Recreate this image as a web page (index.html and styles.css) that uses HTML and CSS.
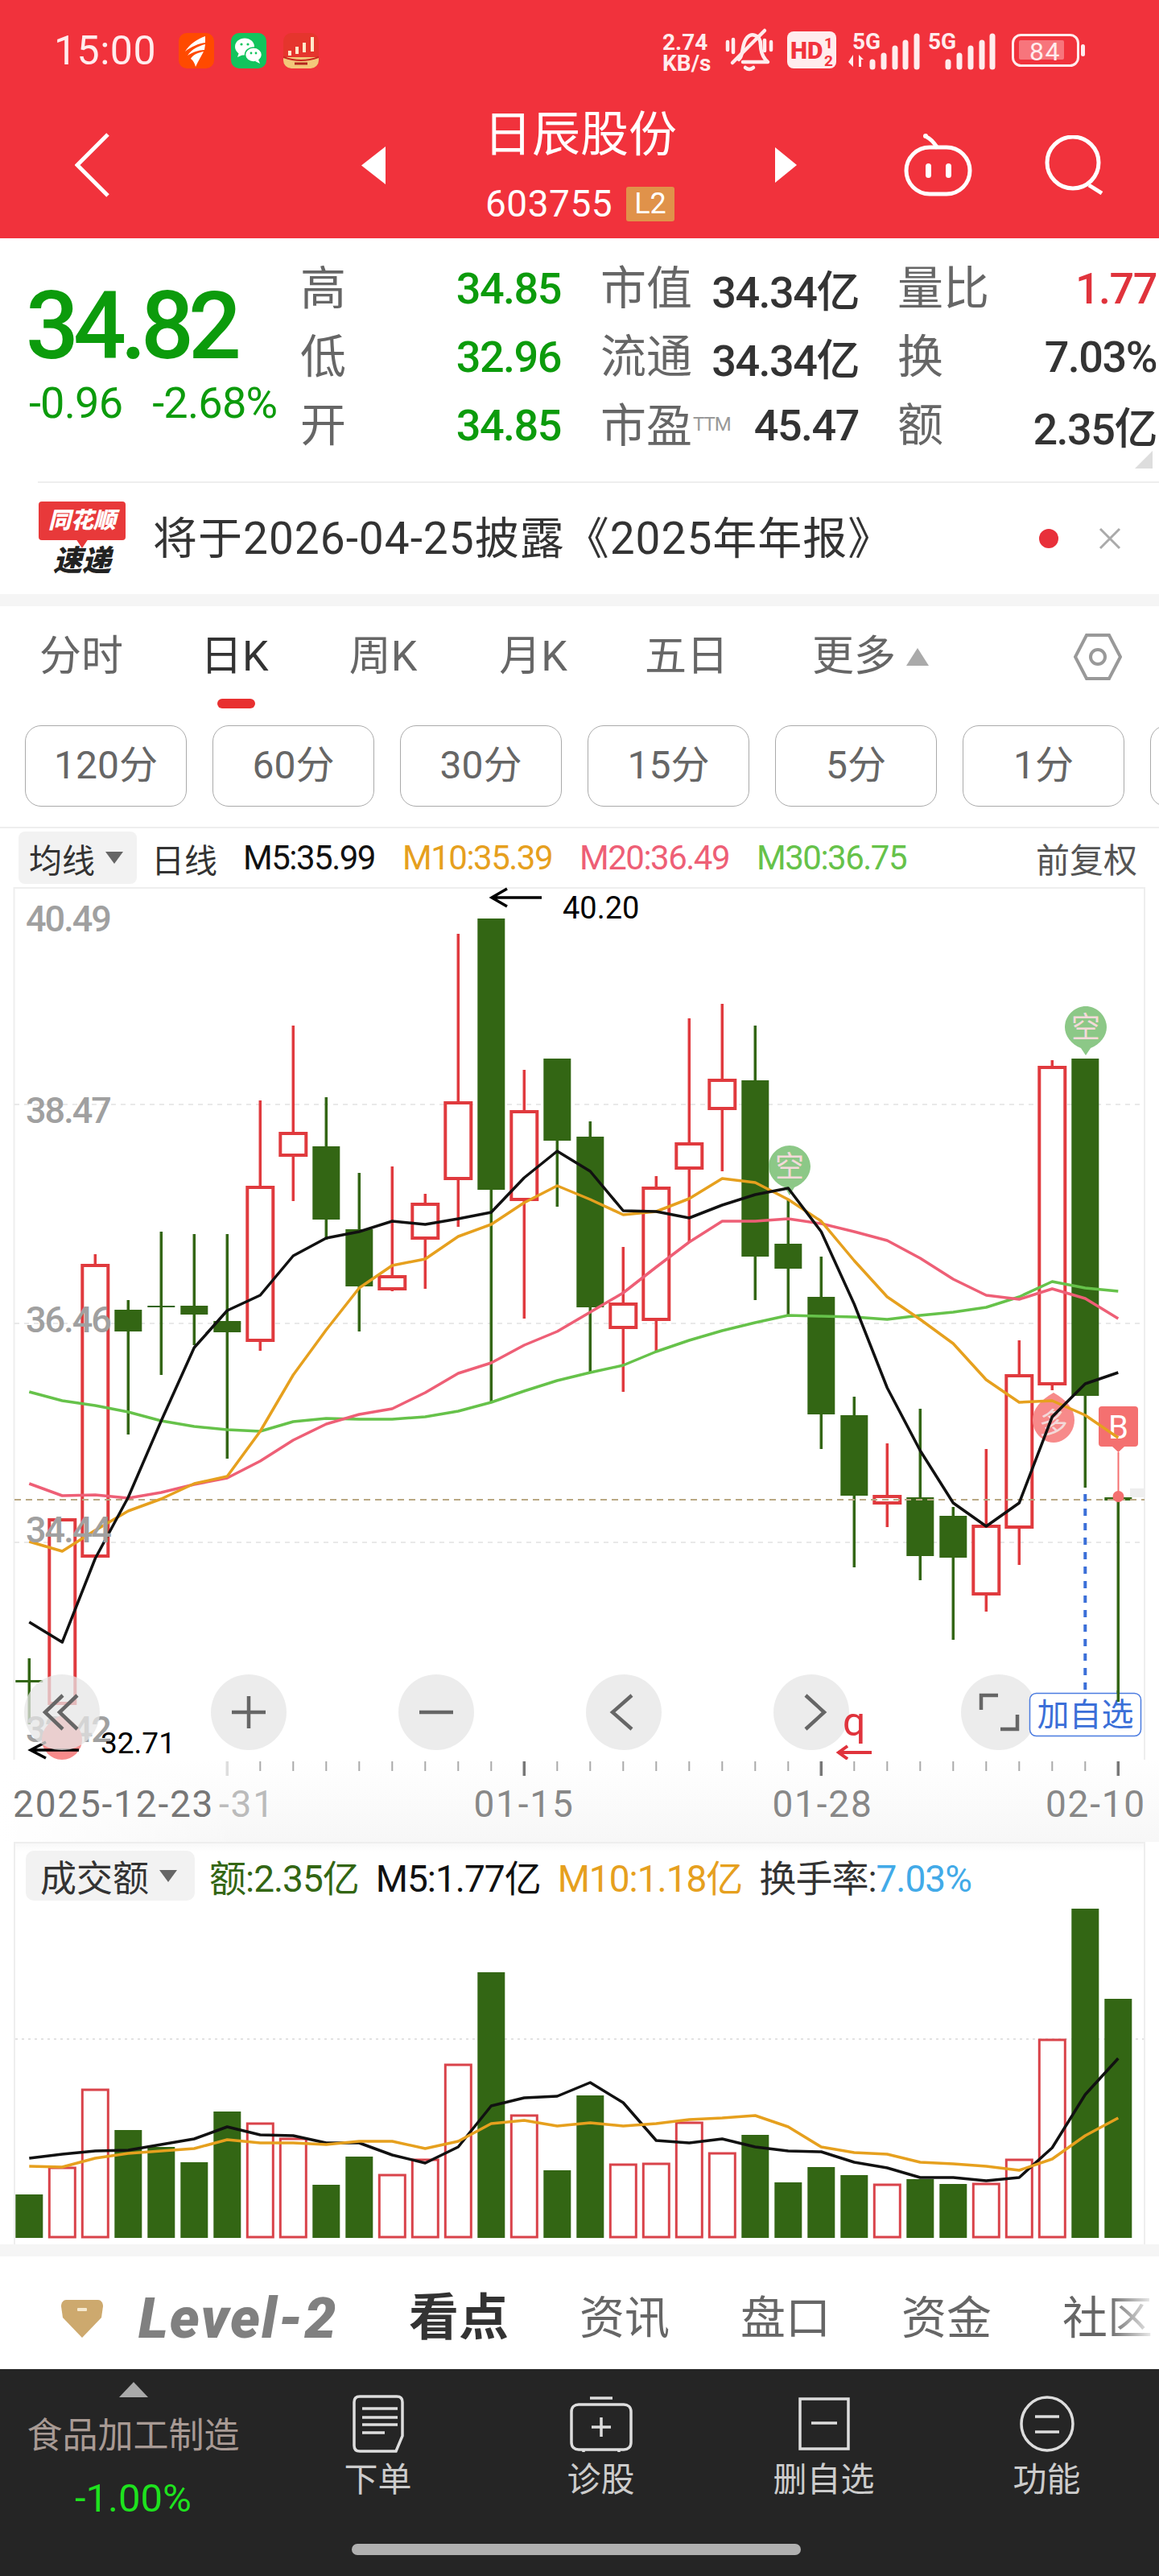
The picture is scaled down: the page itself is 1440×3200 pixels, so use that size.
FILE: index.html
```html
<!DOCTYPE html>
<html lang="zh-CN">
<head>
<meta charset="utf-8">
<title>日辰股份</title>
<link rel="stylesheet" href="styles.css">
</head>
<body>
<div class="page">
  <header class="header">
    <div class="statusbar">
      <div class="status-left">
        <span class="time">15:00</span>
        <svg class="app-icon app-first" viewBox="0 0 44 44"><rect width="44" height="44" rx="10" fill="#ff4a00"/><path d="M33 4C24 7 13 14 8 23c7-6 17-10 25-11zM33 14c-8 2-17 6-22 14 6-4 14-7 21-7zM31 23c-6 1-14 4-16 9 3 2 5 6 6 10 3-7 7-13 10-19z" fill="#fff"/></svg>
        <svg class="app-icon" viewBox="0 0 44 44"><rect width="44" height="44" rx="10" fill="#12c45d"/><ellipse cx="17" cy="17" rx="12" ry="10.5" fill="#fff"/><path d="M10 24l-2 6 7-3z" fill="#fff"/><ellipse cx="28" cy="27" rx="10.5" ry="9" fill="#fff" stroke="#12c45d" stroke-width="1.5"/><path d="M34 33l2 5-6-3z" fill="#fff"/><circle cx="13" cy="14" r="1.6" fill="#12c45d"/><circle cx="21" cy="14" r="1.6" fill="#12c45d"/><circle cx="25" cy="25" r="1.4" fill="#12c45d"/><circle cx="31" cy="25" r="1.4" fill="#12c45d"/></svg>
        <svg class="app-icon" viewBox="0 0 44 44"><rect width="44" height="44" rx="10" fill="#e5352d"/><path d="M0 30h44v4a10 10 0 0 1-10 10H10A10 10 0 0 1 0 34z" fill="#f3c77a"/><path d="M0 30q22 8 44 0" fill="none" stroke="#c9261f" stroke-width="2"/><path d="M6 22h4v6H6zM15 17h4v9h-4zM24 12h4v12h-4zM34 5h4v18h-4z" fill="#ffe9c9"/><path d="M14 38h16" stroke="#b3261e" stroke-width="3"/></svg>
      </div>
      <svg class="status-right" viewBox="820 30 530 66">
        <text class="st-small" x="823" y="62">2.74</text>
        <text class="st-small" x="823" y="88">KB/s</text>
        <g class="st-line">
          <path d="M918 74c6-6 3-14 8-24 3-6 8-8 12-6 4 1 7 5 7 12 0 8 2 13 6 18l3 3h-31"/>
          <path d="M910 78l40-40"/>
          <path d="M904 52v10M911 49v16M950 50v13M958 52v10"/>
          <path d="M926 84q5 4 10 0" />
        </g>
        <rect class="st-fill" x="978" y="39" width="61" height="46" rx="8"/>
        <text class="st-hd" x="982" y="73">HD</text>
        <text class="st-hd-sm" x="1024" y="60">1</text>
        <text class="st-hd-sm" x="1024" y="82">2</text>
        <text class="st-small" x="1059" y="61">5G</text>
        <path class="st-fill" d="M1060 68v15l-6-6zM1067 68l6 6h-3v9h-3z"/>
        <path class="st-bar" d="M1084 83v-6M1098 83v-14M1112 83v-23M1125 83v-30M1139 83v-38"/>
        <text class="st-small" x="1153" y="61">5G</text>
        <path class="st-bar" d="M1178 83v-6M1192 83v-14M1206 83v-23M1220 83v-30M1233 83v-38"/>
        <rect class="st-batt" x="1258.5" y="43.5" width="81" height="38" rx="10"/>
        <rect class="st-batt-fill" x="1266" y="50" width="56" height="24" rx="2"/>
        <text class="st-batt-num" x="1279" y="75">84</text>
        <rect class="st-fill" x="1343" y="55" width="5" height="15" rx="2.5"/>
      </svg>
    </div>
    <nav class="navrow">
      <svg class="nav-back" viewBox="0 0 44 80"><path d="M41 2L3 40l38 38"/></svg>
      <svg class="nav-prev" viewBox="0 0 30 47"><path d="M30 0L0 23.5 30 47z"/></svg>
      <div class="nav-title">
        <div class="stock-name">日辰股份</div>
        <div class="stock-code"><span class="code-num">603755</span><span class="l2">L2</span></div>
      </div>
      <svg class="nav-next" viewBox="0 0 27 44"><path d="M0 0l27 22L0 44z"/></svg>
      <svg class="nav-robot" viewBox="0 0 85 78"><g class="robot-line"><path d="M28 4c5 2 10 8 14 14"/><rect x="3" y="17" width="79" height="58" rx="29"/></g><circle cx="27" cy="3" r="3" fill="#fff"/><rect x="27" y="37" width="7" height="18" rx="3.5" fill="#fff"/><rect x="52" y="37" width="7" height="18" rx="3.5" fill="#fff"/></svg>
      <svg class="nav-search" viewBox="0 0 74 74"><g class="robot-line"><circle cx="35" cy="34" r="32"/><path d="M55 62l16 10"/></g></svg>
    </nav>
  </header>

  <section class="quote">
    <div class="quote-main">
      <div class="price">34.82</div>
      <div class="change"><span>-0.96</span><span>-2.68%</span></div>
    </div>
    <div class="quote-grid">
      <span class="q-l q-l1">高</span><span class="q-v green">34.85</span><span class="q-l q-l2">市值</span><span class="q-v dark q-v2">34.34亿</span><span class="q-l q-l3">量比</span><span class="q-v red">1.77</span>
      <span class="q-l q-l1">低</span><span class="q-v green">32.96</span><span class="q-l q-l2">流通</span><span class="q-v dark q-v2">34.34亿</span><span class="q-l q-l3">换</span><span class="q-v dark">7.03%</span>
      <span class="q-l q-l1">开</span><span class="q-v green">34.85</span><span class="q-l q-l2">市盈<small>TTM</small></span><span class="q-v dark q-v2">45.47</span><span class="q-l q-l3">额</span><span class="q-v dark">2.35亿</span>
    </div>
    <svg class="corner" viewBox="0 0 22 22"><path d="M22 0v22H0z"/></svg>
  </section>

  <div class="notice">
    <div class="notice-logo">
      <div class="flag">同花顺</div>
      <div class="flag-sub">速递</div>
    </div>
    <div class="notice-text">将于2026-04-25披露《2025年年报》</div>
    <span class="notice-dot"></span>
    <svg class="notice-x" viewBox="0 0 28 28"><path d="M2 2l24 24M26 2L2 26"/></svg>
  </div>

  <div class="gap"></div>

  <div class="tabs">
    <span class="tab tab-a">分时</span>
    <span class="tab active tab-b">日K</span>
    <span class="tab">周K</span>
    <span class="tab tab-a">月K</span>
    <span class="tab tab-c">五日</span>
    <span class="tab tab-more">更多<i class="up-caret"></i></span>
    <svg class="hex" viewBox="0 0 60 58"><path d="M16 2h28l14 27-14 27H16L2 29z"/><circle cx="30" cy="29" r="9"/></svg>
  </div>

  <div class="periods">
    <span class="period">120分</span>
    <span class="period">60分</span>
    <span class="period">30分</span>
    <span class="period">15分</span>
    <span class="period">5分</span>
    <span class="period">1分</span>
    <span class="period"></span>
  </div>

  <div class="ma-legend">
    <span class="pill">均线<i class="caret"></i></span>
    <span class="ma-name">日线</span>
    <span class="ma c-black">M5:35.99</span>
    <span class="ma c-orange">M10:35.39</span>
    <span class="ma c-pink">M20:36.49</span>
    <span class="ma c-green">M30:36.75</span>
    <span class="adjust">前复权</span>
  </div>

  <svg class="kline" viewBox="0 1102 1440 1084">
    <path class="frame" d="M17.5 2186V1103H1422V2186"/>
    <path class="grid" d="M18 1372H1421M18 1644H1421M18 1916H1421"/>

    <path class="wick-g" d="M36.3 2060V2142M159.3 1615V1782M200.3 1530V1708M241.3 1533V1671M282.3 1533V1812M405.3 1363V1540M446.3 1457V1654M610.3 1141V1741M692.3 1315V1499M733.3 1393V1705M938.3 1274V1615M979.3 1490V1634M1020.3 1561V1800M1061.3 1735V1947M1143.3 1750V1963M1184.3 1872V2037M1348.3 1315V1848M1389.3 1856V2114"/>
    <path class="wick-r" d="M118.3 1558V1572M323.3 1367V1678M364.3 1274V1492M487.3 1449V1604M528.3 1483V1601M569.3 1160V1524M651.3 1329V1638M774.3 1549V1729M815.3 1461V1678M856.3 1265V1543M897.3 1247V1455M1102.3 1793V1897M1225.3 1800V2002M1266.3 1665V1944M1307.3 1317V1727"/>

    <g class="body-g">
      <rect x="19.3" y="2087" width="34" height="3"/>
      <rect x="142.3" y="1627" width="34" height="27"/>
      <rect x="183.3" y="1622" width="34" height="2"/>
      <rect x="224.3" y="1622" width="34" height="11"/>
      <rect x="265.3" y="1641" width="34" height="14"/>
      <rect x="388.3" y="1424" width="34" height="91"/>
      <rect x="429.3" y="1527" width="34" height="71"/>
      <rect x="593.3" y="1141" width="34" height="337"/>
      <rect x="675.3" y="1315" width="34" height="102"/>
      <rect x="716.3" y="1412" width="34" height="212"/>
      <rect x="921.3" y="1342" width="34" height="219"/>
      <rect x="962.3" y="1545" width="34" height="31"/>
      <rect x="1003.3" y="1611" width="34" height="146"/>
      <rect x="1044.3" y="1758" width="34" height="100"/>
      <rect x="1126.3" y="1860" width="34" height="73"/>
      <rect x="1167.3" y="1883" width="34" height="52"/>
      <rect x="1331.3" y="1315" width="34" height="419"/>
      <rect x="1372.3" y="1860" width="34" height="4"/>
    </g>
    <g class="body-r">
      <rect x="61.3" y="1888" width="32" height="228"/>
      <rect x="102.3" y="1572" width="32" height="361"/>
      <rect x="307.3" y="1475" width="32" height="190"/>
      <rect x="348.3" y="1408" width="32" height="27"/>
      <rect x="471.3" y="1586" width="32" height="15"/>
      <rect x="512.3" y="1496" width="32" height="42"/>
      <rect x="553.3" y="1370" width="32" height="94"/>
      <rect x="635.3" y="1381" width="32" height="109"/>
      <rect x="758.3" y="1620" width="32" height="29"/>
      <rect x="799.3" y="1476" width="32" height="163"/>
      <rect x="840.3" y="1421" width="32" height="30"/>
      <rect x="881.3" y="1342" width="32" height="35"/>
      <rect x="1086.3" y="1859" width="32" height="8"/>
      <rect x="1209.3" y="1896" width="32" height="84"/>
      <rect x="1250.3" y="1709" width="32" height="188"/>
      <rect x="1291.3" y="1326" width="32" height="393"/>
    </g>

    <rect class="tag-bg" x="1404" y="1849" width="18" height="11"/>
    <path class="priceline" d="M18 1863H1422"/>
    <path class="blue-dash" d="M1348.3 1856V2103"/>

    <g class="marker-g">
      <path d="M981 1485l-6-10c-12-5-20-15-20-26 0-14 12-26 26-26s26 12 26 26c0 11-8 21-20 26z"/>
      <path d="M1349 1311l-6-9c-12-5-20-15-20-26 0-14 12-26 26-26s26 12 26 26c0 11-8 21-20 26z"/>
    </g>
    <text class="marker-text" x="981" y="1462">空</text>
    <text class="marker-text" x="1349" y="1289">空</text>
    <path class="marker-r" d="M1309 1730c16 9 26 20 26 34 0 15-12 28-26 28s-26-13-26-28c0-14 10-25 26-34z"/>
    <text class="marker-text" x="1309" y="1781">多</text>
    <path class="b-stem" d="M1389.5 1804V1856"/>
    <circle class="b-dot" cx="1389.5" cy="1859" r="7"/>
    <path class="marker-b" d="M1369 1747h41a4 4 0 0 1 4 4v42a4 4 0 0 1-4 4h-13l-7.5 7-7.5-7h-13a4 4 0 0 1-4-4v-42a4 4 0 0 1 4-4z"/>
    <text class="marker-bt" x="1389.5" y="1787">B</text>

    <polyline class="ln ln-green" points="36.3,1729 77.3,1740 118.3,1746 159.3,1754 200.3,1765 241.3,1772 282.3,1776 323.3,1778 364.3,1766 405.3,1762 446.3,1763 487.3,1763 528.3,1760 569.3,1753 610.3,1742 651.3,1728 692.3,1715 733.3,1705 774.3,1696 815.3,1679 856.3,1665 897.3,1653 938.3,1643 979.3,1634 1020.3,1635 1061.3,1636 1102.3,1639 1143.3,1634 1184.3,1630 1225.3,1624 1266.3,1611 1307.3,1592 1348.3,1600 1389.3,1604"/>
    <polyline class="ln ln-pink" points="36.3,1843 77.3,1858 118.3,1857 159.3,1861 200.3,1854 241.3,1844 282.3,1836 323.3,1815 364.3,1789 405.3,1769 446.3,1757 487.3,1750 528.3,1730 569.3,1706 610.3,1693 651.3,1671 692.3,1654 733.3,1630 774.3,1606 815.3,1574 856.3,1543 897.3,1517 938.3,1517 979.3,1514 1020.3,1520 1061.3,1530 1102.3,1541 1143.3,1563 1184.3,1589 1225.3,1609 1266.3,1614 1307.3,1601 1348.3,1613 1389.3,1638"/>
    <polyline class="ln ln-orange" points="36.3,1915 77.3,1927 118.3,1901 159.3,1877 200.3,1862 241.3,1843 282.3,1834 323.3,1778 364.3,1708 405.3,1652 446.3,1600 487.3,1572 528.3,1564 569.3,1536 610.3,1521 651.3,1494 692.3,1473 733.3,1490 774.3,1509 815.3,1505 856.3,1489 897.3,1464 938.3,1469 979.3,1490 1020.3,1517 1061.3,1566 1102.3,1611 1143.3,1639 1184.3,1669 1225.3,1714 1266.3,1742 1307.3,1740 1348.3,1758 1389.3,1786"/>
    <polyline class="ln ln-black" points="36.3,2015 77.3,2040 118.3,1936 159.3,1860 200.3,1765 241.3,1674 282.3,1628 323.3,1609 364.3,1560 405.3,1538 446.3,1530 487.3,1517 528.3,1521 569.3,1514 610.3,1506 651.3,1463 692.3,1430 733.3,1455 774.3,1504 815.3,1505 856.3,1513 897.3,1497 938.3,1484 979.3,1476 1020.3,1530 1061.3,1620 1102.3,1724 1143.3,1802 1184.3,1867 1225.3,1896 1266.3,1867 1307.3,1760 1348.3,1719 1389.3,1705"/>

    <text class="axis-price" x="32" y="1157">40.49</text>
    <text class="axis-price" x="32" y="1395">38.47</text>
    <text class="axis-price" x="32" y="1655">36.46</text>
    <text class="axis-price" x="32" y="1916">34.44</text>
    <text class="axis-price" x="32" y="2164">32.42</text>

    <path class="arrow-k" d="M673 1115H612M630 1104l-19 11 19 11"/>
    <text class="peak" x="699" y="1141">40.20</text>
    <path class="marker-r" d="M77 2130c16 8 25 18 25 31s-11 25-25 25-25-12-25-25 9-23 25-31z"/>
    <path class="arrow-k" d="M98 2174H39M57 2164l-19 10 19 10"/>
    <text class="peak peak-low" x="125" y="2178">32.71</text>

    <g class="round-btn">
      <circle cx="77" cy="2127" r="47"/>
      <circle cx="309" cy="2127" r="47"/>
      <circle cx="542" cy="2127" r="47"/>
      <circle cx="775" cy="2127" r="47"/>
      <circle cx="1008" cy="2127" r="47"/>
      <circle cx="1241" cy="2127" r="47"/>
    </g>
    <path class="round-ico" d="M78 2106l-22 21 22 21M96 2106l-22 21 22 21M309 2107v40M288 2127h42M521 2127h42M785 2106l-24 21 24 21M1001 2106l23 21-23 21M1240 2106h-21v18M1243 2148h21v-18"/>

    <rect class="add-box" x="1279.5" y="2103.5" width="138" height="53" rx="8"/>
    <text class="add-text" x="1348.5" y="2144">加自选</text>
    <path class="wick-g" d="M1389.3 2100V2114"/>
    <text class="red-q" x="1047" y="2156">q</text>
    <path class="arrow-r" d="M1083 2177H1041M1053 2169l-11 8 11 8"/>
  </svg>

  <div class="axis">
    <svg class="axis-svg" viewBox="0 2186 1440 102">
      <path class="tick-light" d="M282.3 2188V2206"/>
      <path class="tick" d="M323.3 2188V2200M364.3 2188V2200M405.3 2188V2200M446.3 2188V2200M487.3 2188V2200M528.3 2188V2200M569.3 2188V2200M610.3 2188V2200M692.3 2188V2200M733.3 2188V2200M774.3 2188V2200M815.3 2188V2200M856.3 2188V2200M897.3 2188V2200M938.3 2188V2200M979.3 2188V2200M1061.3 2188V2200M1102.3 2188V2200M1143.3 2188V2200M1184.3 2188V2200M1225.3 2188V2200M1266.3 2188V2200M1307.3 2188V2200M1348.3 2188V2200"/>
      <path class="tick-major" d="M651.3 2188V2206M1020.3 2188V2206M1389.3 2188V2206"/>
      <text class="date" x="16" y="2257">2025-12-23</text>
      <text class="date date-fade" x="272" y="2257">-31</text>
      <text class="date date-mid" x="651" y="2257">01-15</text>
      <text class="date date-mid" x="1022" y="2257">01-28</text>
      <text class="date date-end" x="1424" y="2257">02-10</text>
    </svg>
  </div>

  <section class="vol">
    <div class="vol-legend">
      <span class="pill pill-lg">成交额<i class="caret"></i></span>
      <span class="vl c-dgreen">额:2.35亿</span>
      <span class="vl c-black">M5:1.77亿</span>
      <span class="vl c-orange">M10:1.18亿</span>
      <span class="vl c-dark">换手率:<em class="c-blue">7.03%</em></span>
    </div>
    <svg class="vol-svg" viewBox="19 2371 1402 412">
      <path class="grid grid-dot" d="M19 2533H1421"/>
      <g class="body-g">
        <rect x="19.3" y="2726" width="34" height="54"/>
        <rect x="142.3" y="2646" width="34" height="134"/>
        <rect x="183.3" y="2667" width="34" height="113"/>
        <rect x="224.3" y="2686" width="34" height="94"/>
        <rect x="265.3" y="2623" width="34" height="157"/>
        <rect x="388.3" y="2714" width="34" height="66"/>
        <rect x="429.3" y="2679" width="34" height="101"/>
        <rect x="593.3" y="2450" width="34" height="330"/>
        <rect x="675.3" y="2696" width="34" height="84"/>
        <rect x="716.3" y="2603" width="34" height="177"/>
        <rect x="921.3" y="2652" width="34" height="128"/>
        <rect x="962.3" y="2711" width="34" height="69"/>
        <rect x="1003.3" y="2692" width="34" height="88"/>
        <rect x="1044.3" y="2702" width="34" height="78"/>
        <rect x="1126.3" y="2707" width="34" height="73"/>
        <rect x="1167.3" y="2713" width="34" height="67"/>
        <rect x="1331.3" y="2371" width="34" height="409"/>
        <rect x="1372.3" y="2483" width="34" height="297"/>
      </g>
      <g class="body-v">
        <rect x="61.3" y="2693" width="32" height="86"/>
        <rect x="102.3" y="2596" width="32" height="183"/>
        <rect x="307.3" y="2638" width="32" height="141"/>
        <rect x="348.3" y="2657" width="32" height="122"/>
        <rect x="471.3" y="2702" width="32" height="77"/>
        <rect x="512.3" y="2683" width="32" height="96"/>
        <rect x="553.3" y="2565" width="32" height="214"/>
        <rect x="635.3" y="2628" width="32" height="151"/>
        <rect x="758.3" y="2689" width="32" height="90"/>
        <rect x="799.3" y="2688" width="32" height="91"/>
        <rect x="840.3" y="2637" width="32" height="142"/>
        <rect x="881.3" y="2675" width="32" height="104"/>
        <rect x="1086.3" y="2714" width="32" height="65"/>
        <rect x="1209.3" y="2713" width="32" height="66"/>
        <rect x="1250.3" y="2683" width="32" height="96"/>
        <rect x="1291.3" y="2534" width="32" height="245"/>
      </g>
      <polyline class="ln ln-black" points="36.3,2681 77.3,2676 118.3,2672 159.3,2671 200.3,2664 241.3,2657 282.3,2642 323.3,2652 364.3,2653 405.3,2662 446.3,2662 487.3,2677 528.3,2687 569.3,2667 610.3,2616 651.3,2606 692.3,2604 733.3,2587 774.3,2612 815.3,2659 856.3,2662 897.3,2657 938.3,2667 979.3,2672 1020.3,2673 1061.3,2686 1102.3,2693 1143.3,2705 1184.3,2705 1225.3,2709 1266.3,2705 1307.3,2668 1348.3,2602 1389.3,2557"/>
      <polyline class="ln ln-orange" points="36.3,2691 77.3,2692 118.3,2681 159.3,2675 200.3,2672 241.3,2669 282.3,2658 323.3,2662 364.3,2662 405.3,2664 446.3,2660 487.3,2660 528.3,2669 569.3,2660 610.3,2638 651.3,2634 692.3,2641 733.3,2637 774.3,2641 815.3,2638 856.3,2633 897.3,2631 938.3,2628 979.3,2642 1020.3,2667 1061.3,2674 1102.3,2676 1143.3,2686 1184.3,2688 1225.3,2691 1266.3,2696 1307.3,2682 1348.3,2653 1389.3,2631"/>
    </svg>
  </section>

  <div class="gap"></div>

  <div class="news-tabs">
    <svg class="gem" viewBox="0 0 52 47"><path d="M6 0h40c3 0 6 3 6 8l-2 14-24 25L2 22 0 8c0-5 3-8 6-8z"/><rect x="20" y="10" width="12" height="4" rx="1"/></svg>
    <span class="level2">Level-2</span>
    <span class="news-tab news-active">看点</span>
    <span class="news-tab">资讯</span>
    <span class="news-tab">盘口</span>
    <span class="news-tab">资金</span>
    <span class="news-tab news-fade">社区</span>
  </div>

  <footer class="bottom">
    <div class="sector">
      <i class="sector-caret"></i>
      <div class="sector-name">食品加工制造</div>
      <div class="sector-pct">-1.00%</div>
    </div>
    <div class="action">
      <svg class="action-ico" viewBox="0 0 80 72"><g class="ico-line"><path d="M17 2h46c5 0 7 3 7 7v42l-8 19H17c-5 0-7-3-7-7V9c0-4 2-7 7-7z"/><path d="M20 17h44M20 28h44M20 37h44M20 47h28"/></g></svg>
      <span>下单</span>
    </div>
    <div class="action">
      <svg class="action-ico" viewBox="0 0 80 72"><g class="ico-line"><path d="M3 21c0-6 4-9 9-9h56c5 0 9 3 9 9v38c0 6-4 9-9 9H12c-5 0-9-3-9-9z"/><path d="M26 4h28M40 28v24M28 40h24M18 68v3M62 68v3"/></g></svg>
      <span>诊股</span>
    </div>
    <div class="action">
      <svg class="action-ico" viewBox="0 0 80 72"><g class="ico-line"><rect x="10" y="5" width="60" height="62"/><path d="M24 35h32"/></g></svg>
      <span>删自选</span>
    </div>
    <div class="action">
      <svg class="action-ico" viewBox="0 0 80 72"><g class="ico-line"><ellipse cx="40" cy="36" rx="32" ry="33"/><path d="M25 27h30M25 46h30"/></g></svg>
      <span>功能</span>
    </div>
    <span class="home-bar"></span>
  </footer>
</div>
</body>
</html>
```

FILE: styles.css
```css
* { box-sizing: border-box; }
html, body { margin: 0; padding: 0; background: #fff; }
body { font-family: Roboto, "Noto Sans CJK SC", sans-serif; }
.page { width: 1440px; height: 3200px; overflow: hidden; position: relative; background: #fff; }
svg { display: block; }
i, em { font-style: normal; }

/* header */
.header { height: 296px; background: #f1323c; color: #fff; }
.statusbar { height: 126px; display: flex; align-items: center; justify-content: space-between; padding: 0 90px 0 67px; }
.status-left { display: flex; align-items: center; }
.time { font-size: 50px; line-height: 50px; width: 126px; color: #ffeced; letter-spacing: .5px; }
.app-icon { width: 44px; height: 44px; margin-left: 21px; }
.app-first { margin-left: 29px; }
.status-right { width: 530px; height: 66px; }
.st-small { font-size: 28px; font-weight: 700; fill: #ffeced; }
.st-line { fill: none; stroke: #ffeced; stroke-width: 4.5; stroke-linecap: round; stroke-linejoin: round; }
.st-fill { fill: #ffeced; }
.st-hd { font-size: 30px; font-weight: 900; fill: #f1323c; }
.st-hd-sm { font-size: 19px; font-weight: 700; fill: #f1323c; }
.st-bar { stroke: #ffeced; stroke-width: 7; stroke-linecap: round; fill: none; }
.st-batt { fill: none; stroke: #ffeced; stroke-width: 3; }
.st-batt-fill { fill: #f7757c; }
.st-batt-num { font-size: 32px; fill: #ffeced; letter-spacing: 1.5px; }

.navrow { height: 170px; display: flex; align-items: center; padding: 0 0 12px 93px; }
.nav-back { width: 44px; height: 80px; fill: none; stroke: #fff; stroke-width: 5; }
.nav-prev { width: 30px; height: 47px; margin-left: 312px; fill: #fff; }
.nav-title { width: 240px; margin-left: 124px; }
.stock-name { font-size: 60px; line-height: 66px; white-space: nowrap; margin-left: -2px; }
.stock-code { display: flex; align-items: center; margin-top: 30px; height: 44px; font-size: 46px; line-height: 44px; }
.code-num { width: 175px; flex: none; letter-spacing: .5px; }
.l2 { width: 60px; height: 43px; background: #e0924a; color: #fff; font-size: 36px; line-height: 43px; text-align: center; border-radius: 3px; flex: none; letter-spacing: 0; }
.nav-next { width: 27px; height: 44px; margin-left: 120px; fill: #fff; }
.nav-robot { width: 85px; height: 78px; margin-left: 133px; }
.robot-line { fill: none; stroke: #fff; stroke-width: 5; }
.nav-search { width: 74px; height: 74px; margin-left: 90px; }

/* quote */
.quote { height: 302px; position: relative; display: flex; padding: 20px 0 0 36px; }
.quote-main { width: 339px; color: #0c9b0c; }
.price { font-size: 116px; line-height: 116px; font-weight: 500; letter-spacing: -7px; margin-top: 31px; margin-left: -4px; }
.change { display: flex; gap: 37px; font-size: 54px; line-height: 52px; margin-top: 12px; letter-spacing: -.8px; white-space: nowrap; }
.quote-grid { display: grid; grid-template-columns: 60px 262px 166px 204px 165px 205px; grid-auto-rows: 85px; align-items: center; margin-left: -2px; }
.q-l { font-size: 57px; color: #666; white-space: nowrap; line-height: 85px; }
.q-l2 { padding-left: 51px; }
.q-l3 { padding-left: 50px; }
.q-l small { font-size: 24px; color: #999; vertical-align: 14px; margin-left: 1px; letter-spacing: -1px; }
.q-v { font-size: 54px; font-weight: 500; text-align: right; white-space: nowrap; letter-spacing: -1.5px; }
.q-v:nth-child(6n) { position: relative; left: 2px; }
.q-v:nth-child(6n+2) { position: relative; left: 2px; }
.q-v2 { position: relative; left: 2px; }
.green { color: #0c9b0c; }
.red { color: #e0333c; }
.dark { color: #333; }
.corner { position: absolute; right: 8px; bottom: 16px; width: 22px; height: 22px; fill: #ddd; }

/* notice */
.notice { height: 140px; margin: 0 47px; border-top: 2px solid #eee; display: flex; align-items: center; margin-right: 0; padding-top: 0; position: relative; }
.notice-logo { width: 108px; margin-left: 1px; }
.flag { height: 48px; background: #e8393a; border-radius: 4px; color: #fff; font-size: 28px; font-weight: 900; font-style: italic; line-height: 48px; text-align: center; position: relative; }
.flag::after { content: ""; position: absolute; left: 46px; top: 46px; border: 8px solid transparent; border-top: 12px solid #e8393a; }
.flag-sub { font-size: 36px; line-height: 36px; font-weight: 900; font-style: italic; text-align: center; color: #222; margin-top: 8px; }
.notice-text { margin-left: 34px; width: 1060px; font-size: 55px; line-height: 64px; color: #333; white-space: nowrap; letter-spacing: 1px; }
.notice-dot { width: 24px; height: 24px; border-radius: 50%; background: #e8303a; margin-left: 41px; }
.notice-x { width: 28px; height: 28px; margin-left: 50px; fill: none; stroke: #aaa; stroke-width: 3; }
.gap { height: 15px; background: #f5f5f5; }

/* tabs */
.tabs { height: 124px; display: flex; align-items: center; padding: 2px 0 0 49px; position: relative; font-size: 52px; color: #666; }
.tab { margin-right: 102px; line-height: 60px; white-space: nowrap; }
.tab-a { margin-right: 96px; }
.tab-b { margin-right: 100px; }
.tab-c { margin-right: 104px; }
.tab.active { color: #333; position: relative; }
.tab.active::after { content: ""; position: absolute; left: 21px; top: 82px; width: 47px; height: 12px; border-radius: 6px; background: #e83030; }
.tab-more { display: flex; align-items: center; margin-right: 0; }
.up-caret { width: 0; height: 0; margin-left: 13px; border-left: 14px solid transparent; border-right: 14px solid transparent; border-bottom: 22px solid #aaa; }
.hex { width: 60px; height: 58px; margin-left: auto; margin-right: 46px; fill: none; stroke: #999; stroke-width: 4; }

.periods { display: flex; gap: 32px; padding-left: 31px; margin-top: 24px; height: 101px; overflow: hidden; }
.period { flex: 0 0 201px; height: 101px; border: 1.5px solid #aaa; border-radius: 20px; text-align: center; font-size: 48px; line-height: 98px; color: #666; }

.ma-legend { margin-top: 25px; border-top: 2px solid #eee; height: 75px; display: flex; align-items: center; padding-left: 23px; font-size: 42px; white-space: nowrap; }
.pill { width: 147px; height: 65px; background: #f2f2f2; border-radius: 8px; display: flex; align-items: center; padding-left: 13px; color: #333; font-size: 41px; flex: none; }
.caret { width: 0; height: 0; margin-left: 13px; border-left: 11px solid transparent; border-right: 11px solid transparent; border-top: 15px solid #666; }
.ma-name { margin-left: 18px; font-size: 41px; color: #333; width: 114px; }
.ma { letter-spacing: -1.5px; width: 220px; font-size: 42px; }
.ma.c-black { width: 198px; }
.adjust { margin-left: auto; margin-right: 27px; font-size: 42px; color: #555; }
.c-black { color: #111; }
.c-orange { color: #e6a01e; }
.c-pink { color: #ee5f76; }
.c-green { color: #66c24a; }
.c-dgreen { color: #336614; }
.c-dark { color: #333; }
.c-blue { color: #42aae8; }

/* kline */
.kline { width: 1440px; height: 1084px; overflow: hidden; }
.frame { fill: none; stroke: #eee; stroke-width: 2; }
.grid { fill: none; stroke: #e2e2e2; stroke-width: 1.5; stroke-dasharray: 6 6; }
.grid-dot { stroke-dasharray: 3 5; stroke-width: 2; }
.wick-g { fill: none; stroke: #336614; stroke-width: 3.5; }
.wick-r { fill: none; stroke: #e03a3e; stroke-width: 3.5; }
.body-g { fill: #336614; }
.body-r { fill: #fff; stroke: #e03a3e; stroke-width: 4; }
.body-v { fill: #fff; stroke: #d9434a; stroke-width: 3; }
.tag-bg { fill: #eee; }
.priceline { fill: none; stroke: #b9a883; stroke-width: 2; stroke-dasharray: 8 6; }
.blue-dash { fill: none; stroke: #3b6fd8; stroke-width: 4; stroke-dasharray: 9 9; }
.ln { fill: none; stroke-width: 3.5; stroke-linejoin: round; }
.ln-black { stroke: #111; }
.ln-orange { stroke: #e6a01e; }
.ln-pink { stroke: #ee5f76; }
.ln-green { stroke: #66c24a; }
.axis-price { font-size: 45px; font-weight: 500; fill: #a0a0a0; letter-spacing: -2px; }
.arrow-k { fill: none; stroke: #000; stroke-width: 3.5; }
.arrow-r { fill: none; stroke: #e0333c; stroke-width: 4; }
.peak { font-size: 38px; fill: #000; }
.peak-low { font-size: 37px; }
.marker-r { fill: #f78a8a; }
.marker-g { fill: #8cc887; }
.marker-text { font-size: 36px; fill: #f3d9d9; text-anchor: middle; }
.marker-b { fill: #f47070; }
.marker-bt { font-size: 40px; fill: #fff; text-anchor: middle; }
.b-stem { fill: none; stroke: #f47070; stroke-width: 2; }
.b-dot { fill: #f47070; }
.round-btn { fill: #e6e6e6; opacity: .75; }
.round-ico { fill: none; stroke: #666; stroke-width: 4.5; }
.add-box { fill: #fff; stroke: #4a7be0; stroke-width: 1.5; }
.add-text { font-size: 40px; fill: #3b6fd8; text-anchor: middle; }
.red-q { font-size: 50px; fill: #e0333c; }

/* axis */
.axis { height: 102px; background: linear-gradient(90deg, #fff 0, rgba(255,255,255,0) 300px), linear-gradient(#fff, #f7f7f7); }
.axis-svg { width: 1440px; height: 102px; }
.tick { fill: none; stroke: #aaa; stroke-width: 2; }
.tick-major { fill: none; stroke: #777; stroke-width: 3.5; }
.tick-light { fill: none; stroke: #ddd; stroke-width: 3.5; }
.date { font-size: 46px; fill: #777; letter-spacing: 1.8px; }
.date-fade { fill: #bbb; }
.date-mid { fill: #888; text-anchor: middle; }
.date-end { fill: #888; text-anchor: end; }

/* volume */
.vol { margin: 0 17px; height: 500px; border: 2px solid #eee; border-bottom: 0; }
.vol-legend { height: 81px; padding: 9px 0 10px 13px; display: flex; align-items: center; font-size: 46px; white-space: nowrap; background: linear-gradient(#f8f8f8 0, #fff 10px); }
.pill-lg { width: 210px; height: 62px; border-radius: 10px; padding-left: 18px; font-size: 45px; }
.vl { letter-spacing: -1px; margin-left: 21px; }
.vl:nth-child(2) { margin-left: 18px; }
.vol-svg { width: 1402px; height: 412px; }

/* news tabs */
.news-tabs { height: 140px; display: flex; align-items: center; padding: 14px 0 0 76px; position: relative; overflow: hidden; }
.gem { width: 52px; height: 47px; fill: #cda96e; flex: none; }
.gem rect { fill: #f5e9cf; }
.level2 { margin-left: 44px; width: 336px; font-size: 70px; line-height: 80px; font-style: italic; font-weight: 900; color: #808080; letter-spacing: 2px; flex: none; }
.news-tab { font-size: 56px; color: #666; line-height: 70px; margin-left: 88px; flex: none; }
.news-active { font-size: 62px; font-weight: 700; color: #333; margin-left: 0; }
.news-fade { background: linear-gradient(90deg, #666 50%, #eee 100%); -webkit-background-clip: text; background-clip: text; color: transparent; }

/* bottom */
.bottom { height: 257px; background: #252525; display: flex; position: relative; }
.sector { width: 331px; display: flex; flex-direction: column; align-items: center; padding-top: 16px; }
.sector-caret { width: 0; height: 0; border-left: 18px solid transparent; border-right: 18px solid transparent; border-bottom: 19px solid #aaa; }
.sector-name { margin-top: 20px; font-size: 44px; line-height: 56px; color: #a89a94; white-space: nowrap; }
.sector-pct { margin-top: 22px; font-size: 49px; line-height: 56px; color: #1ee21e; }
.action { width: 277px; display: flex; flex-direction: column; align-items: center; padding-top: 32px; color: #ccc; font-size: 42px; }
.action span { margin-top: 9px; line-height: 50px; }
.action-ico { width: 80px; height: 72px; }
.ico-line { fill: none; stroke: #ddd; stroke-width: 3.5; }
.home-bar { position: absolute; left: 437px; top: 217px; width: 558px; height: 14px; border-radius: 7px; background: #b0b0b0; }
```
